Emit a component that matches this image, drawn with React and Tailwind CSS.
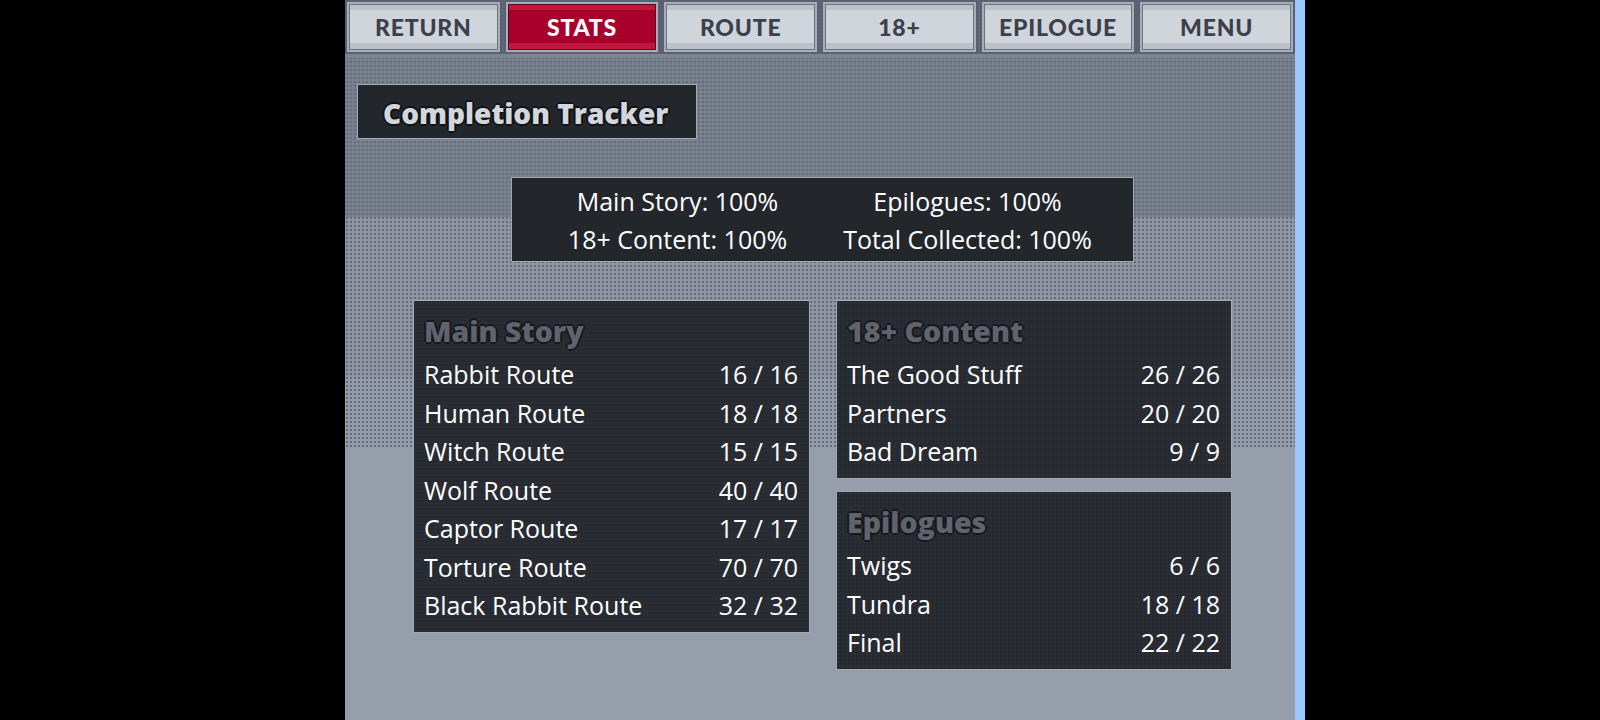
import React from 'react';

const tabs = ['RETURN', 'STATS', 'ROUTE', '18+', 'EPILOGUE', 'MENU'];

const mainStory = [
  ['Rabbit Route', '16 / 16'],
  ['Human Route', '18 / 18'],
  ['Witch Route', '15 / 15'],
  ['Wolf Route', '40 / 40'],
  ['Captor Route', '17 / 17'],
  ['Torture Route', '70 / 70'],
  ['Black Rabbit Route', '32 / 32'],
];

const adult = [
  ['The Good Stuff', '26 / 26'],
  ['Partners', '20 / 20'],
  ['Bad Dream', '9 / 9'],
];

const epilogues = [
  ['Twigs', '6 / 6'],
  ['Tundra', '18 / 18'],
  ['Final', '22 / 22'],
];

function Tab({ label, active }) {
  return (
    <div className="flex-1 h-[54px] bg-[#5a6170] p-[2px]">
      <div className="h-full bg-[#a7aeb9] p-[2px]">
        <div
          className={
            active
              ? 'h-full border border-[#5c0a1c] bg-[#a8002c] flex items-center justify-center shadow-[inset_0_5px_0_#c0173f,inset_0_-6px_0_#c0173f]'
              : 'h-full border border-[#6b7280] bg-[#d0d4db] flex items-center justify-center shadow-[inset_0_5px_0_#bcc1ca,inset_0_-6px_0_#bcc1ca]'
          }
        >
          <span
            className={
              "font-['Lato',sans-serif] text-[23px] font-black tracking-[0.8px] " +
              (active ? 'text-white' : 'text-[#3b404b]')
            }
          >
            {label}
          </span>
        </div>
      </div>
    </div>
  );
}

function Panel({ title, rows, className }) {
  return (
    <div className={'border border-[#a3a9b3] bg-[#272a30] bg-[radial-gradient(circle,#2d3037_1px,transparent_1px)] bg-[length:4px_4px] pl-[10px] pr-[11px] pt-[12px] ' + className}>
      <h3 className="text-[28.5px] leading-[36px] font-extrabold text-[#5f636e] [text-shadow:-2px_0_#16181c,2px_0_#16181c,0_-2px_#16181c,0_2px_#16181c]">
        {title}
      </h3>
      <div className="mt-[6px]">
        {rows.map(([name, value]) => (
          <div key={name} className="flex justify-between text-[25px] leading-[38.5px] text-white">
            <span>{name}</span>
            <span>{value}</span>
          </div>
        ))}
      </div>
    </div>
  );
}

export default function App() {
  return (
    <div className="w-[1600px] h-[720px] bg-black flex font-['Open_Sans',sans-serif] overflow-hidden">
      <div className="w-[345px]" />
      <div className="w-[950px] h-full flex flex-col bg-[linear-gradient(to_bottom,transparent_448px,#979eab_448px),radial-gradient(circle,#646b79_1px,transparent_1.2px),linear-gradient(to_bottom,#5a6170_0px,#5a6170_58px,#7a818e_58px,#7a818e_217px,#8f95a2_217px,#8f95a2_378px,#959cab_378px,#959cab_448px,#979eab_448px)] bg-[length:auto,4px_4px,auto]">
        <div className="flex gap-[2px] h-[58px] border-b-4 border-[#7d8491]">
          {tabs.map(t => (
            <Tab key={t} label={t} active={t === 'STATS'} />
          ))}
        </div>

        <div className="ml-[12px] mt-[26px] w-[340px] h-[55px] border border-[#a3a9b3] bg-[#23262b] flex items-center pl-[25px] pt-[3px]">
          <h1 className="text-[28px] font-extrabold text-[#d3d6dc] [text-shadow:-2px_0_#111316,2px_0_#111316,0_-2px_#111316,0_2px_#111316]">
            Completion Tracker
          </h1>
        </div>

        <div className="ml-[166px] mt-[38px] w-[623px] h-[85px] border border-[#a3a9b3] bg-[#23262b] grid grid-cols-[290px_290px] justify-center content-center text-[25px] leading-[38px] text-white text-center">
          <div>Main Story: 100%</div>
          <div>Epilogues: 100%</div>
          <div>18+ Content: 100%</div>
          <div>Total Collected: 100%</div>
        </div>

        <div className="ml-[68px] mt-[38px] flex gap-[26px] items-start">
          <Panel title="Main Story" rows={mainStory} className="w-[397px] h-[333px]" />
          <div className="flex flex-col gap-[12px]">
            <Panel title="18+ Content" rows={adult} className="w-[396px] h-[179px]" />
            <Panel title="Epilogues" rows={epilogues} className="w-[396px] h-[179px]" />
          </div>
        </div>
      </div>
      <div className="w-[10px] h-full bg-[#99c9fb]" />
    </div>
  );
}
